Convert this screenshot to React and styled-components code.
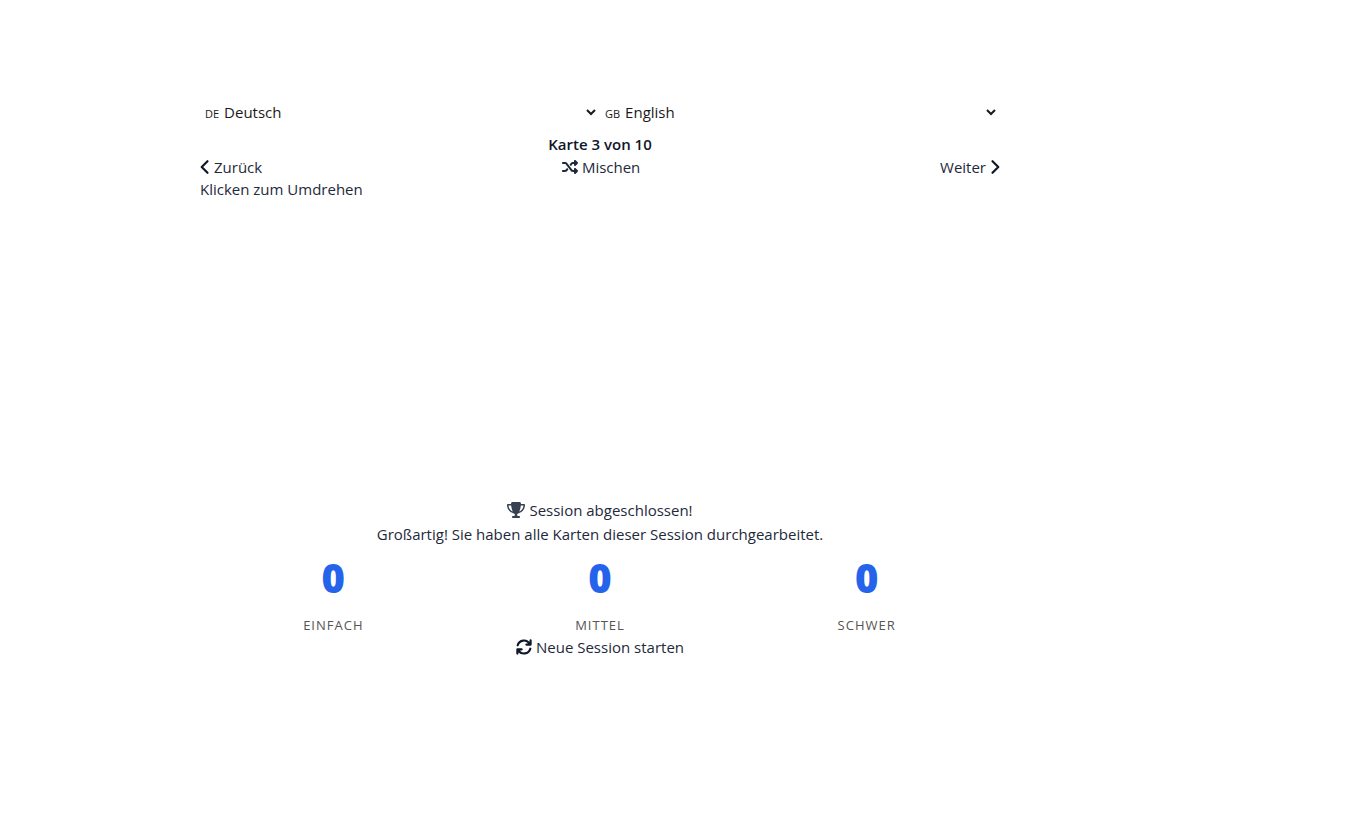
import React, { useState } from "react";
import styled, { createGlobalStyle } from "styled-components";
import { FaShuffle, FaTrophy } from "react-icons/fa6";

const GlobalStyle = createGlobalStyle`
  *, *::before, *::after { box-sizing: border-box; }
  body {
    margin: 0;
    background: #fff;
    color: #1e293b;
    font: 400 15px/24px "Open Sans", "Noto Sans", sans-serif;
  }
  p, h1, h2, dl, dd { margin: 0; }
`;

const Page = styled.main`
  max-width: 1200px;
  padding: 100px 16px 32px;
`;

const Trainer = styled.div`
  max-width: 800px;
  margin: 0 auto;
`;

const Languages = styled.div`
  display: grid;
  grid-template-columns: 1fr 1fr;
  margin-bottom: 6px;
`;

const LanguageField = styled.label`
  display: flex;
  align-items: baseline;
  padding: 0 1px 0 5px;
`;

const CountryCode = styled.span`
  font-size: 11px;
  font-weight: 500;
  color: #1a1a1a;
`;

const LanguageSelect = styled.select`
  flex: 1;
  min-width: 0;
  height: 24px;
  padding: 0 0 0 1px;
  border: 0;
  background: transparent;
  color: #1a1a1a;
  font: inherit;
`;

const Progress = styled.h1`
  font-size: 15px;
  font-weight: 600;
  line-height: 24px;
  text-align: center;
  color: #0f172a;
`;

const Controls = styled.div`
  display: flex;
  justify-content: space-between;
`;

const TextButton = styled.button`
  display: inline-flex;
  align-items: center;
  gap: 4px;
  height: 22px;
  padding: 0;
  border: 0;
  background: transparent;
  color: #1e293b;
  font: inherit;
  cursor: pointer;
`;

const LineIcon = styled.svg`
  width: ${(p) => p.$width}px;
  height: 16px;
  fill: none;
  stroke: #0f172a;
  stroke-width: 2.2;
  stroke-linecap: round;
  stroke-linejoin: round;
`;

const Trophy = styled(FaTrophy)`
  width: 18px;
  height: 16px;
  color: #374151;
`;

const Card = styled.section`
  min-height: 320px;
  line-height: 22px;
`;

const Summary = styled.section`
  text-align: center;
`;

const SummaryTitle = styled.h2`
  display: flex;
  justify-content: center;
  align-items: center;
  gap: 4px;
  font: inherit;
`;

const Stats = styled.dl`
  display: grid;
  grid-template-columns: repeat(3, 1fr);
`;

const Stat = styled.div`
  display: flex;
  flex-direction: column-reverse;
`;

const StatValue = styled.dd`
  font-size: 40px;
  font-weight: 800;
  line-height: 64px;
  color: #2563eb;
`;

const StatLabel = styled.dt`
  padding-top: 4px;
  font-size: 13px;
  font-weight: 500;
  line-height: 22px;
  letter-spacing: 1px;
  text-transform: uppercase;
  color: #555;
`;

const languages = [
  { code: "DE", name: "Deutsch" },
  { code: "GB", name: "English" },
];

function LanguagePicker({ initial, label }) {
  const [code, setCode] = useState(initial);
  return (
    <LanguageField>
      <CountryCode>{code}</CountryCode>
      <LanguageSelect aria-label={label} value={code} onChange={(e) => setCode(e.target.value)}>
        {languages.map((l) => (
          <option key={l.code} value={l.code}>{l.name}</option>
        ))}
      </LanguageSelect>
    </LanguageField>
  );
}

function Chevron({ direction }) {
  return (
    <LineIcon $width={10} viewBox="0 0 10 16" aria-hidden="true">
      <path d={direction === "left" ? "M7.5 2.2 1.7 8l5.8 5.8" : "M2.5 2.2 8.3 8l-5.8 5.8"} />
    </LineIcon>
  );
}

function RestartIcon() {
  return (
    <LineIcon $width={16} viewBox="0 0 16 16" aria-hidden="true">
      <path d="M1.7 6.3A6.5 6.5 0 0 1 13.6 4.8M14.6 1.4v4.2h-4.2" />
      <path d="M14.3 9.7A6.5 6.5 0 0 1 2.4 11.2M1.4 14.6v-4.2h4.2" />
    </LineIcon>
  );
}

const stats = [["Einfach", 0], ["Mittel", 0], ["Schwer", 0]];

export default function App() {
  return (
    <>
      <GlobalStyle />
      <Page>
        <Trainer>
          <Languages>
            <LanguagePicker initial="DE" label="Ausgangssprache" />
            <LanguagePicker initial="GB" label="Zielsprache" />
          </Languages>
          <Progress>Karte 3 von 10</Progress>
          <Controls>
            <TextButton type="button"><Chevron direction="left" />Zurück</TextButton>
            <TextButton type="button"><FaShuffle size={16} />Mischen</TextButton>
            <TextButton type="button">Weiter<Chevron direction="right" /></TextButton>
          </Controls>
          <Card>Klicken zum Umdrehen</Card>
          <Summary>
            <SummaryTitle><Trophy />Session abgeschlossen!</SummaryTitle>
            <p>Großartig! Sie haben alle Karten dieser Session durchgearbeitet.</p>
            <Stats>
              {stats.map(([name, value]) => (
                <Stat key={name}>
                  <StatLabel>{name}</StatLabel>
                  <StatValue>{value}</StatValue>
                </Stat>
              ))}
            </Stats>
            <TextButton type="button"><RestartIcon />Neue Session starten</TextButton>
          </Summary>
        </Trainer>
      </Page>
    </>
  );
}
